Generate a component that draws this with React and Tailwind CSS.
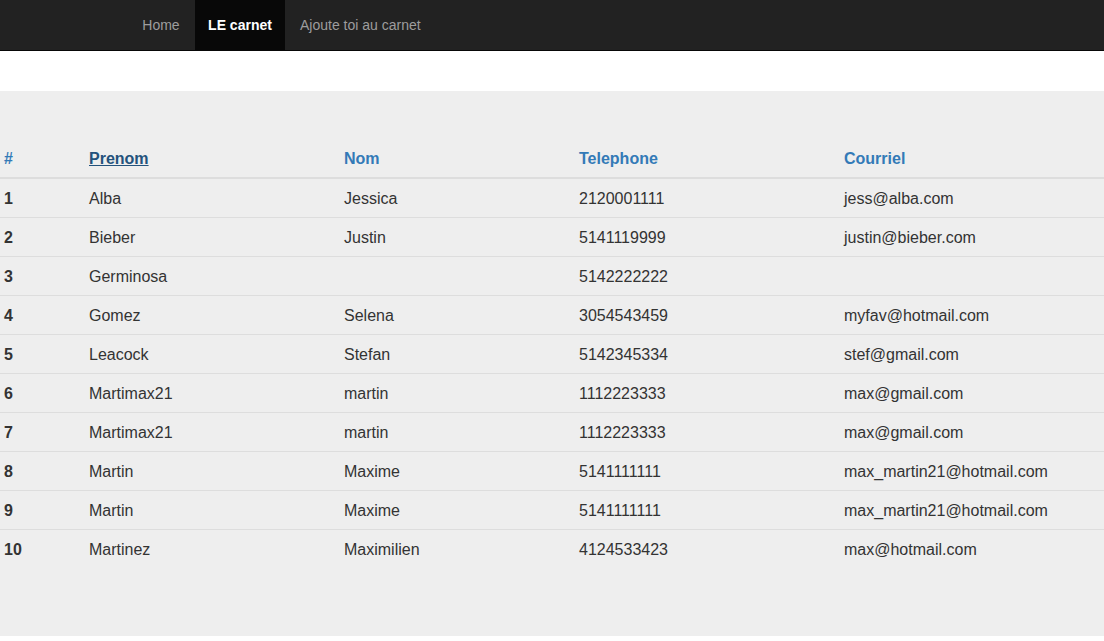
const contacts = [
  ["1", "Alba", "Jessica", "2120001111", "jess@alba.com"],
  ["2", "Bieber", "Justin", "5141119999", "justin@bieber.com"],
  ["3", "Germinosa", "", "5142222222", ""],
  ["4", "Gomez", "Selena", "3054543459", "myfav@hotmail.com"],
  ["5", "Leacock", "Stefan", "5142345334", "stef@gmail.com"],
  ["6", "Martimax21", "martin", "1112223333", "max@gmail.com"],
  ["7", "Martimax21", "martin", "1112223333", "max@gmail.com"],
  ["8", "Martin", "Maxime", "5141111111", "max_martin21@hotmail.com"],
  ["9", "Martin", "Maxime", "5141111111", "max_martin21@hotmail.com"],
  ["10", "Martinez", "Maximilien", "4124533423", "max@hotmail.com"],
];

export default function App() {
  return (
    <div className="bg-white text-[#333] text-[16px] leading-[22px] font-['Liberation_Sans',Arial,sans-serif]">
      {/* Navbar */}
      <nav className="h-[51px] bg-[#222] border-b border-[#080808]">
        <ul className="flex h-[50px] pl-[127px] text-[14px]">
          <li>
            <a href="#" className="block w-[68px] text-center leading-[50px] text-[#9d9d9d]">Home</a>
          </li>
          <li>
            <a href="#" className="block w-[90px] text-center leading-[50px] text-white font-bold bg-[#080808]">LE carnet</a>
          </li>
          <li>
            <a href="#" className="block px-[15px] leading-[50px] text-[#9d9d9d]">Ajoute toi au carnet</a>
          </li>
        </ul>
      </nav>

      {/* Jumbotron */}
      <section className="mt-[40px] bg-[#eee] pt-[48px] pb-[48px]">
        <table className="w-full border-collapse mb-[20px]">
          <thead>
            <tr className="text-left text-[#337ab7] font-bold">
              <th className="w-[85px] px-1 pt-[9px] pb-[7px] border-b-2 border-[#ddd]">#</th>
              <th className="w-[255px] px-1 pt-[9px] pb-[7px] border-b-2 border-[#ddd]">
                <a href="#" className="text-[#23527c] underline">Prenom</a>
              </th>
              <th className="w-[235px] px-1 pt-[9px] pb-[7px] border-b-2 border-[#ddd]">Nom</th>
              <th className="w-[265px] px-1 pt-[9px] pb-[7px] border-b-2 border-[#ddd]">Telephone</th>
              <th className="px-1 pt-[9px] pb-[7px] border-b-2 border-[#ddd]">Courriel</th>
            </tr>
          </thead>
          <tbody>
            {contacts.map((c, i) => (
              <tr key={c[0]} className={i > 0 ? "border-t border-[#ddd]" : ""}>
                <td className="px-1 pt-[9px] pb-[7px] font-bold">{c[0]}</td>
                <td className="px-1 pt-[9px] pb-[7px]">{c[1]}</td>
                <td className="px-1 pt-[9px] pb-[7px]">{c[2]}</td>
                <td className="px-1 pt-[9px] pb-[7px]">{c[3]}</td>
                <td className="px-1 pt-[9px] pb-[7px]">{c[4]}</td>
              </tr>
            ))}
          </tbody>
        </table>
      </section>
    </div>
  );
}
